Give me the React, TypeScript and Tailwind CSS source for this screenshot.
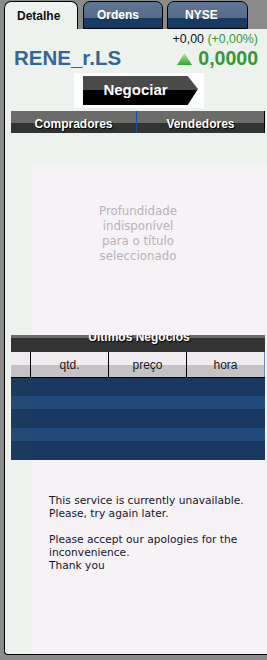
export default function App() {
  const rows: { h: string; dark: boolean }[] = [
    { h: "h-[18px]", dark: true },
    { h: "h-[13px]", dark: false },
    { h: "h-[19px]", dark: true },
    { h: "h-[13px]", dark: false },
    { h: "h-[19px]", dark: true },
  ];
  return (
    <div className="w-[267px] h-[660px] bg-[#8b8b8b] overflow-hidden font-['Liberation_Sans',Arial,sans-serif]">
      {/* Tabs */}
      <div className="flex h-[29px] pt-[1px] pl-[4px]">
        <div className="w-[74px] h-[28px] border border-b-0 border-black rounded-t-[7px] bg-[#eef2ee] flex items-center pl-[12px] text-[12px] font-bold text-[#111]">
          Detalhe
        </div>
        <div className="ml-[5px] w-[80px] h-[28px] border border-black rounded-t-[7px] bg-[linear-gradient(#5f7595_0%,#566c8c_62%,#173b61_62%,#173b61_100%)] flex items-center pl-[13px] text-[12px] font-bold text-white">
          Ordens
        </div>
        <div className="ml-[4px] w-[81px] h-[28px] border border-black rounded-t-[7px] bg-[linear-gradient(#5f7595_0%,#566c8c_62%,#173b61_62%,#173b61_100%)] flex items-center pl-[17px] text-[12px] font-bold text-white">
          NYSE
        </div>
      </div>

      {/* Panel */}
      <div className="ml-[4px] h-[626px] border-l border-b border-black rounded-bl-[4px] bg-[#eef2ee] flex flex-col">
        <div className="pt-[3px] pr-[9px] text-right text-[12.4px] leading-[14px] text-[#111]">
          +0,00 <span className="text-[#339933]">(+0,00%)</span>
        </div>
        <div className="flex items-baseline justify-between h-[24px] leading-[24px] pl-[9px] pr-[9px]">
          <span className="text-[20.5px] font-bold text-[#336699]">RENE_r.LS</span>
          <span className="flex items-baseline">
            <svg width="15" height="12" viewBox="0 0 15 12" className="mr-[6px]">
              <defs>
                <linearGradient id="tri" x1="0" y1="0" x2="0" y2="1">
                  <stop offset="0" stopColor="#b4e69a" />
                  <stop offset="1" stopColor="#35a635" />
                </linearGradient>
              </defs>
              <polygon points="7.5,0 15,12 0,12" fill="url(#tri)" />
            </svg>
            <span className="text-[19.5px] font-bold text-[#339933]">0,0000</span>
          </span>
        </div>

        {/* Negociar */}
        <div className="mt-[3px] ml-[69px] w-[130px] bg-white pl-[9px] pr-[6px] py-[3px]">
          <div className="w-[115px] h-[29px] bg-[linear-gradient(#4b4b4b_0%,#4b4b4b_50%,#000_50%,#000_100%)] [clip-path:polygon(0_0,91%_0,100%_45%,91%_100%,0_100%)] flex items-center justify-center pr-[10px] text-white font-bold text-[15px]">
            Negociar
          </div>
        </div>

        {/* Compradores / Vendedores */}
        <div className="mt-[3px] ml-[6px] w-[254px] h-[22px] flex border-r border-black bg-[linear-gradient(#6b6c6a_0%,#6b6c6a_55%,#333_55%,#333_100%)] text-white font-bold text-[12px] [text-shadow:1px_1px_1px_#000]">
          <div className="w-[126px] border-r border-[#1f4f9a] flex items-center justify-center pt-[3px]">
            Compradores
          </div>
          <div className="flex-1 flex items-center justify-center pt-[3px]">Vendedores</div>
        </div>

        {/* Pink content */}
        <div className="mt-[32px] ml-[27px] flex-1 bg-[#f6f2f6] flex flex-col">
          <div className="h-[170px] pt-[39px]">
            <div className="-ml-[21px] w-[254px] text-center text-[11.8px] leading-[15px] text-[#b6b3bb] font-['DejaVu_Sans',Verdana,sans-serif]">
              Profundidade
              <br />
              indisponível
              <br />
              para o título
              <br />
              seleccionado
            </div>
          </div>

          {/* Ultimos negocios */}
          <div className="-ml-[21px] w-[254px] h-[17px] overflow-hidden bg-[linear-gradient(#6b6b6b_0px,#6b6b6b_3px,#333_3px,#333_100%)] text-center text-white font-bold text-[12px] leading-[14px] [text-shadow:1px_1px_1px_#000]">
            <div className="-mt-[5px] pl-[2px]">Últimos Negócios</div>
          </div>
          <div className="-ml-[21px] w-[254px] h-[26px] flex border-b border-black bg-[linear-gradient(#efebef_0%,#efebef_54%,#c4c2c4_54%,#c4c2c4_100%)] text-[12px] text-[#1a1a1a]">
            <div className="w-[20px] border-r border-black" />
            <div className="w-[78px] border-r border-black flex items-center justify-center">qtd.</div>
            <div className="w-[78px] border-r border-black flex items-center justify-center">preço</div>
            <div className="flex-1 border-r border-[#6a8fc6] flex items-center justify-center">hora</div>
          </div>
          <div className="-ml-[21px] w-[254px] flex flex-col">
            {rows.map((r, i) => (
              <div key={i} className={`${r.h} flex`}>
                <div className={`w-[21px] ${r.dark ? "bg-[#1b3a5e]" : "bg-[#244a78]"}`} />
                <div className={`flex-1 ${r.dark ? "bg-[#1a3862]" : "bg-[#22497c]"}`} />
              </div>
            ))}
          </div>

          {/* Message */}
          <div className="mt-[34px] pl-[17px] text-[10.67px] leading-[13px] text-[#16162a] font-['DejaVu_Sans',Verdana,sans-serif]">
            This service is currently unavailable.
            <br />
            Please, try again later.
            <br />
            <br />
            Please accept our apologies for the
            <br />
            inconvenience.
            <br />
            Thank you
          </div>
        </div>
      </div>
    </div>
  );
}
